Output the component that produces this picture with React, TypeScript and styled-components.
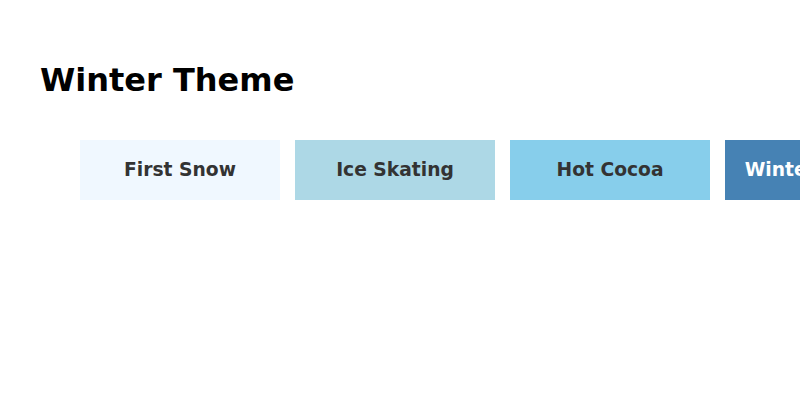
import React from "react";
import styled, { createGlobalStyle } from "styled-components";

const Global = createGlobalStyle`
  html, body { margin: 0; padding: 0; background: #ffffff; }
  body { font-family: "DejaVu Sans", sans-serif; overflow: hidden; }
`;

const Page = styled.div`
  padding: 40px;
`;

const Title = styled.h1`
  margin: 21px 0 0;
  font-size: 32px;
  font-weight: bold;
  color: #000;
  line-height: normal;
`;

const Row = styled.div`
  display: flex;
  gap: 15px;
  margin: 41px 0 0 40px;
`;

const Tile = styled.button<{ $bg: string; $fg: string }>`
  flex: 0 0 200px;
  height: 60px;
  border: none;
  padding: 0 0 2px;
  background: ${(p) => p.$bg};
  color: ${(p) => p.$fg};
  font-family: "DejaVu Sans", sans-serif;
  font-weight: bold;
  font-size: 18.7px;
  white-space: nowrap;
`;

const items = [
  { label: "First Snow", bg: "#F0F8FF", fg: "#333333" },
  { label: "Ice Skating", bg: "#ADD8E6", fg: "#333333" },
  { label: "Hot Cocoa", bg: "#87CEEB", fg: "#333333" },
  { label: "Winter Solstice", bg: "#4682B4", fg: "#ffffff" },
];

export default function App() {
  return (
    <>
      <Global />
      <Page>
        <Title>Winter Theme</Title>
        <Row>
          {items.map((it) => (
            <Tile key={it.label} $bg={it.bg} $fg={it.fg}>
              {it.label}
            </Tile>
          ))}
        </Row>
      </Page>
    </>
  );
}
